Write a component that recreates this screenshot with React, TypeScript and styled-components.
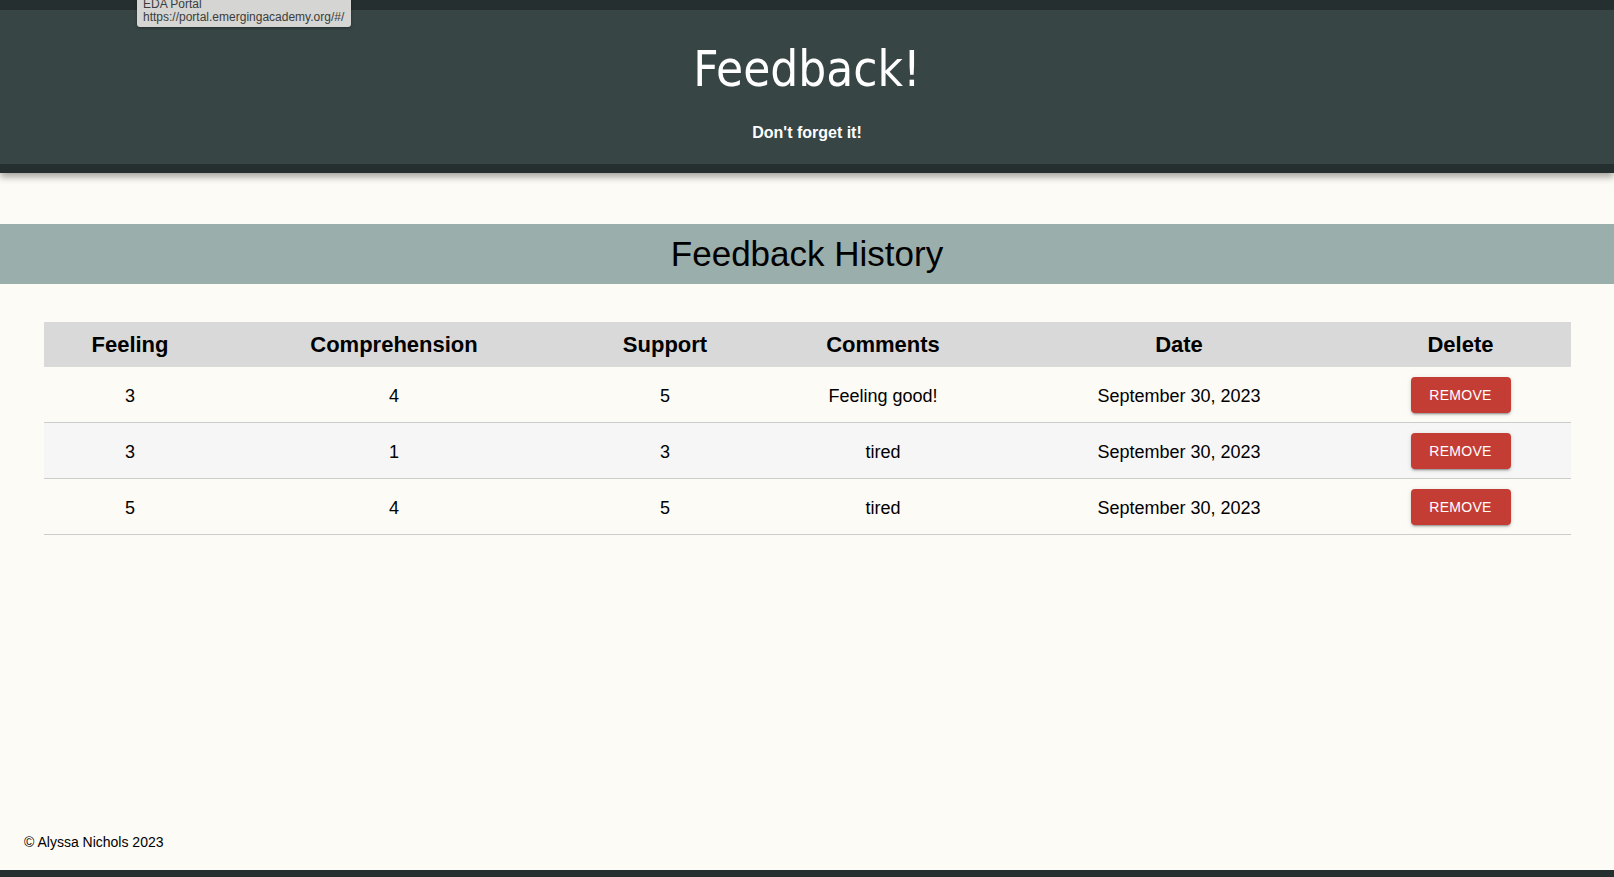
import * as React from 'react';
import styled, { createGlobalStyle } from 'styled-components';

const GlobalStyle = createGlobalStyle`
  html, body {
    margin: 0;
    padding: 0;
    background: #fdfbf5;
    font-family: 'Liberation Sans', Arial, sans-serif;
    color: #000;
  }
`;

const Page = styled.div`
  min-height: 100vh;
  display: flex;
  flex-direction: column;
  position: relative;
`;

const Header = styled.header`
  background: #374545;
  border-top: 10px solid #262f2f;
  border-bottom: 9px solid #262f2f;
  box-shadow: 0 4px 7px rgba(0, 0, 0, 0.35);
  padding: 32px 0 22px;
  text-align: center;
  color: #fff;
`;

const Title = styled.h1`
  margin: 0;
  font-family: 'DejaVu Sans Condensed', 'DejaVu Sans', Verdana, sans-serif;
  font-weight: 400;
  font-size: 49px;
  line-height: 56px;
`;

const Tagline = styled.p`
  margin: 26px 0 0;
  font-size: 16px;
  font-weight: 700;
  line-height: 18px;
`;

const Tooltip = styled.div`
  position: absolute;
  top: 0;
  left: 137px;
  width: 214px;
  height: 27px;
  overflow: hidden;
  background: #d5d6d3;
  border-radius: 0 0 3px 3px;
  box-shadow: 0 1px 3px rgba(0, 0, 0, 0.35);
  color: #3c3c3c;
  font-size: 12px;
  line-height: 13px;
`;

const TooltipText = styled.div`
  margin-top: -2px;
  padding-left: 6px;
  white-space: nowrap;
`;

const SectionBand = styled.h2`
  margin: 51px 0 0;
  height: 60px;
  line-height: 60px;
  background: #9aaeab;
  text-align: center;
  font-size: 35px;
  font-weight: 400;
`;

const Main = styled.main`
  flex: 1;
  padding: 38px 43px 0 44px;
`;

const Table = styled.table`
  width: 100%;
  table-layout: fixed;
  border-collapse: collapse;
`;

const HeadCell = styled.th`
  background: #d9d9d9;
  height: 45px;
  padding: 0;
  font-size: 22px;
  font-weight: 700;
  text-align: center;
`;

const Row = styled.tr<{ $alt: boolean }>`
  background: ${(p) => (p.$alt ? '#f6f6f6' : 'transparent')};
  border-bottom: 1px solid #cccccc;
`;

const Cell = styled.td`
  height: 52px;
  padding: 3px 0 0;
  font-size: 18px;
  text-align: center;
`;

const RemoveButton = styled.button`
  width: 100px;
  height: 36px;
  margin-top: -3px;
  border: none;
  border-radius: 4px;
  background: #c43d35;
  color: #fff;
  font-family: 'Liberation Sans', Arial, sans-serif;
  font-size: 14px;
  font-weight: 500;
  letter-spacing: 0.3px;
  text-transform: uppercase;
  cursor: pointer;
  box-shadow: 0 3px 1px -2px rgba(0, 0, 0, 0.2), 0 2px 2px 0 rgba(0, 0, 0, 0.14),
    0 1px 5px 0 rgba(0, 0, 0, 0.12);
  vertical-align: middle;
`;

const Footer = styled.footer`
  padding: 0 24px 19px;
  font-size: 14px;
  line-height: 17px;
`;

const BottomBar = styled.div`
  height: 7px;
  background: #262f2f;
`;

const columns = [
  { label: 'Feeling', width: 172 },
  { label: 'Comprehension', width: 356 },
  { label: 'Support', width: 186 },
  { label: 'Comments', width: 250 },
  { label: 'Date', width: 342 },
  { label: 'Delete', width: 221 },
];

const feedback = [
  { id: 1, feeling: 3, understanding: 4, support: 5, comments: 'Feeling good!', date: 'September 30, 2023' },
  { id: 2, feeling: 3, understanding: 1, support: 3, comments: 'tired', date: 'September 30, 2023' },
  { id: 3, feeling: 5, understanding: 4, support: 5, comments: 'tired', date: 'September 30, 2023' },
];

const App = () => {
  const [rows, setRows] = React.useState(feedback);

  return (
    <Page>
      <GlobalStyle />
      <Header>
        <Title>Feedback!</Title>
        <Tagline>Don't forget it!</Tagline>
      </Header>
      <Tooltip>
        <TooltipText>
          <div>EDA Portal</div>
          <div>https://portal.emergingacademy.org/#/</div>
        </TooltipText>
      </Tooltip>
      <SectionBand>Feedback History</SectionBand>
      <Main>
        <Table>
          <colgroup>
            {columns.map((c) => (
              <col key={c.label} style={{ width: c.width }} />
            ))}
          </colgroup>
          <thead>
            <tr>
              {columns.map((c) => (
                <HeadCell key={c.label}>{c.label}</HeadCell>
              ))}
            </tr>
          </thead>
          <tbody>
            {rows.map((row, i) => (
              <Row key={row.id} $alt={i % 2 === 1}>
                <Cell>{row.feeling}</Cell>
                <Cell>{row.understanding}</Cell>
                <Cell>{row.support}</Cell>
                <Cell>{row.comments}</Cell>
                <Cell>{row.date}</Cell>
                <Cell>
                  <RemoveButton onClick={() => setRows(rows.filter((r) => r.id !== row.id))}>
                    Remove
                  </RemoveButton>
                </Cell>
              </Row>
            ))}
          </tbody>
        </Table>
      </Main>
      <Footer>© Alyssa Nichols 2023</Footer>
      <BottomBar />
    </Page>
  );
};

export default App;
